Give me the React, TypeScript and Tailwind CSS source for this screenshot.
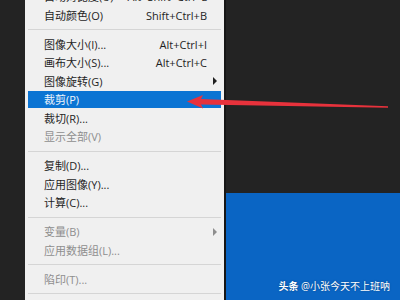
import React from 'react';

type Item =
  | { kind: 'row'; label: string; shortcut?: string; sub?: boolean; disabled?: boolean; active?: boolean }
  | { kind: 'sep' };

const items: Item[] = [
  { kind: 'row', label: '自动对比度(U)', shortcut: 'Alt+Shift+Ctrl+L' },
  { kind: 'row', label: '自动颜色(O)', shortcut: 'Shift+Ctrl+B' },
  { kind: 'sep' },
  { kind: 'row', label: '图像大小(I)...', shortcut: 'Alt+Ctrl+I' },
  { kind: 'row', label: '画布大小(S)...', shortcut: 'Alt+Ctrl+C' },
  { kind: 'row', label: '图像旋转(G)', sub: true },
  { kind: 'row', label: '裁剪(P)', active: true },
  { kind: 'row', label: '裁切(R)...' },
  { kind: 'row', label: '显示全部(V)', disabled: true },
  { kind: 'sep' },
  { kind: 'row', label: '复制(D)...' },
  { kind: 'row', label: '应用图像(Y)...' },
  { kind: 'row', label: '计算(C)...' },
  { kind: 'sep' },
  { kind: 'row', label: '变量(B)', sub: true, disabled: true },
  { kind: 'row', label: '应用数据组(L)...', disabled: true },
  { kind: 'sep' },
  { kind: 'row', label: '陷印(T)...', disabled: true },
  { kind: 'sep' },
];

const fontStyle = { fontFamily: '"Open Sans", "Noto Sans CJK SC", sans-serif' };

function MenuRow({ item }: { item: Item }) {
  if (item.kind === 'sep') {
    return (
      <div className="flex h-[10.5px] items-center">
        <div className="h-px w-full bg-[#d5d5d5]" />
      </div>
    );
  }
  const color = item.active
    ? 'bg-[#0b74d3] text-[#eef5fc]'
    : item.disabled
      ? 'text-[#8e8e8e]'
      : 'text-[#1f1f1f]';
  return (
    <div className="flex h-[18.5px] items-center py-[1px]">
      <div className={`flex h-full w-full items-center pl-[16px] pr-[4px] text-[11px] leading-none ${color}`}>
        <span className="flex-1 whitespace-nowrap">{item.label}</span>
        {item.shortcut && <span className="whitespace-nowrap">{item.shortcut}</span>}
        <span className="flex w-[10px] justify-end">
          {item.sub && (
            <span
              className={`h-0 w-0 border-y-[4px] border-l-[4px] border-y-transparent ${
                item.disabled ? 'border-l-[#8e8e8e]' : 'border-l-[#1f1f1f]'
              }`}
            />
          )}
        </span>
      </div>
    </div>
  );
}

export default function App() {
  return (
    <div className="relative flex h-[300px] w-[400px] overflow-hidden bg-[#232323]" style={fontStyle}>
      <div className="w-[25px] shrink-0" />
      <div className="w-[199px] shrink-0 overflow-hidden bg-[#f0f0f0] px-[3px]">
        <div className="-mt-[12.75px]">
          {items.map((item, i) => (
            <MenuRow key={i} item={item} />
          ))}
        </div>
      </div>
      <div className="flex flex-1 flex-col border-l-2 border-[#161616]">
        <div className="h-[193px] shrink-0" />
        <div className="flex flex-1 items-end justify-end bg-[#0a65c4] pb-[9px] pr-[10px]">
          <span
            className="whitespace-nowrap text-[10px] leading-none text-white"
            style={{ textShadow: '0 0 2px rgba(0,0,0,0.35)' }}>
            <span className="font-bold">头条</span> @小张今天不上班呐
          </span>
        </div>
      </div>

      <svg className="pointer-events-none absolute left-0 top-0" width="400" height="300" viewBox="0 0 400 300">
        <polygon
          points="187,101.5 203,95 201,99 388,106.3 388,107.7 201,104.5 203,108.5"
          fill="#e7323c"
        />
      </svg>
    </div>
  );
}
